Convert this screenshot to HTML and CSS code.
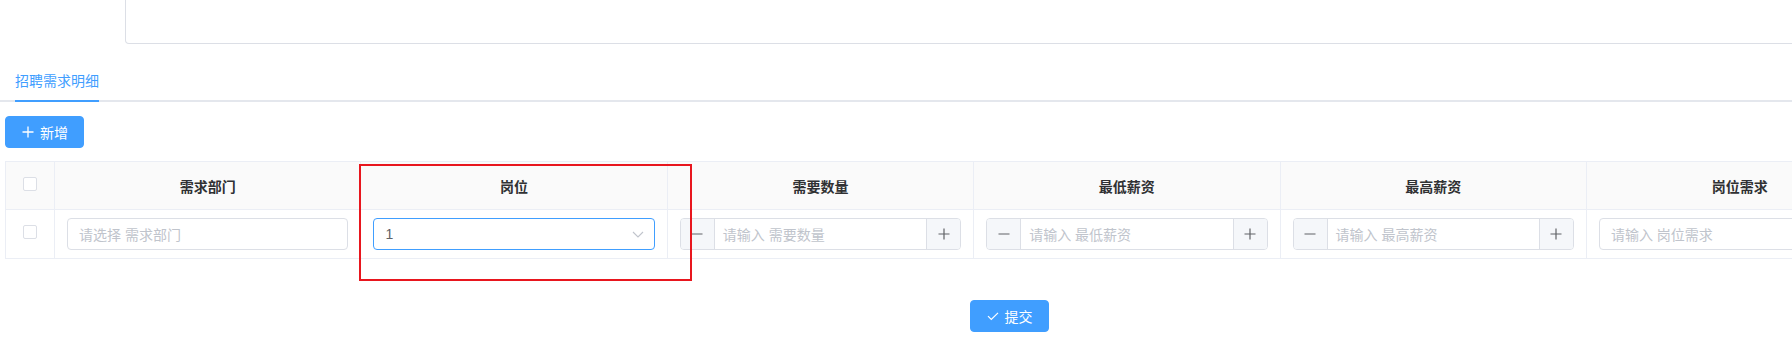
FILE: index.html
```html
<!DOCTYPE html>
<html lang="zh-CN">
<head>
  <meta charset="UTF-8">
  <title>招聘需求</title>
  <link rel="stylesheet" href="styles.css">
</head>
<body>
  <div class="page">
    <!-- 上方备注输入框 (只露出底部) -->
    <div class="remark-row">
      <div class="remark"></div>
    </div>

    <!-- 标签页 -->
    <div class="tabs">
      <div class="tab active">招聘需求明细</div>
    </div>

    <div class="toolbar">
      <button class="btn btn-primary">
        <svg width="14" height="14" viewBox="0 0 14 14"><path d="M7 1.5v11M1.5 7h11" stroke="#fff" stroke-width="1.3" fill="none"/></svg>
        <span>新增</span>
      </button>
    </div>

    <!-- 明细表格 -->
    <div class="table-wrap">
      <div class="grid">
        <div class="th"><span class="checkbox"></span></div>
        <div class="th">需求部门</div>
        <div class="th">岗位</div>
        <div class="th">需要数量</div>
        <div class="th">最低薪资</div>
        <div class="th">最高薪资</div>
        <div class="th">岗位需求</div>

        <div class="td center"><span class="checkbox"></span></div>
        <div class="td"><div class="input placeholder">请选择 需求部门</div></div>
        <div class="td">
          <div class="input select">
            <span>1</span>
            <svg width="14" height="14" viewBox="0 0 14 14"><path d="M2 5l5 5 5-5" stroke="#c0c4cc" stroke-width="1.1" fill="none"/></svg>
          </div>
        </div>
        <div class="td">
          <div class="number">
            <span class="num-btn minus"><svg width="14" height="14" viewBox="0 0 14 14"><path d="M1.5 7h11" stroke="#606266" stroke-width="1.2"/></svg></span>
            <span class="num-text">请输入 需要数量</span>
            <span class="num-btn plus"><svg width="14" height="14" viewBox="0 0 14 14"><path d="M7 1.5v11M1.5 7h11" stroke="#606266" stroke-width="1.2"/></svg></span>
          </div>
        </div>
        <div class="td">
          <div class="number">
            <span class="num-btn minus"><svg width="14" height="14" viewBox="0 0 14 14"><path d="M1.5 7h11" stroke="#606266" stroke-width="1.2"/></svg></span>
            <span class="num-text">请输入 最低薪资</span>
            <span class="num-btn plus"><svg width="14" height="14" viewBox="0 0 14 14"><path d="M7 1.5v11M1.5 7h11" stroke="#606266" stroke-width="1.2"/></svg></span>
          </div>
        </div>
        <div class="td">
          <div class="number">
            <span class="num-btn minus"><svg width="14" height="14" viewBox="0 0 14 14"><path d="M1.5 7h11" stroke="#606266" stroke-width="1.2"/></svg></span>
            <span class="num-text">请输入 最高薪资</span>
            <span class="num-btn plus"><svg width="14" height="14" viewBox="0 0 14 14"><path d="M7 1.5v11M1.5 7h11" stroke="#606266" stroke-width="1.2"/></svg></span>
          </div>
        </div>
        <div class="td"><div class="input placeholder">请输入 岗位需求</div></div>
      </div>
      <!-- 标注框 -->
      <div class="highlight"></div>
    </div>

    <div class="footer">
      <button class="btn btn-primary">
        <svg width="14" height="14" viewBox="0 0 14 14"><path d="M2 7.2l3.3 3.3L12 3.8" stroke="#fff" stroke-width="1.2" fill="none"/></svg>
        <span>提交</span>
      </button>
    </div>
  </div>
</body>
</html>
```

FILE: styles.css
```css
* { box-sizing: border-box; margin: 0; padding: 0; }

body {
  font-family: "Liberation Sans", "Noto Sans CJK SC", sans-serif;
  font-size: 14px;
  color: #606266;
  background: #fff;
  overflow: hidden;
}

.page {
  width: 2018px;
}

/* 备注框 */
.remark-row {
  padding-left: 125px;
}

.remark {
  height: 44px;
  border: 1px solid #dcdfe6;
  border-top: none;
  border-radius: 0 0 4px 4px;
}

/* 标签页 */
.tabs {
  margin-top: 16px;
  border-bottom: 2px solid #e4e7ed;
  padding-left: 15px;
  display: flex;
}

.tab {
  height: 40px;
  line-height: 43px;
  font-size: 14px;
  color: #303133;
  margin-bottom: -2px;
}

.tab.active {
  color: #409eff;
  border-bottom: 2px solid #409eff;
  height: 42px;
}

/* 按钮 */
.toolbar {
  padding: 14px 0 0 5px;
}

.btn {
  display: inline-flex;
  align-items: center;
  gap: 5px;
  height: 32px;
  padding: 0 15px;
  font-family: inherit;
  font-size: 14px;
  border-radius: 4px;
  border: 1px solid transparent;
  cursor: pointer;
}

.btn-primary {
  background: #409eff;
  border-color: #409eff;
  color: #fff;
}

/* 表格 */
.table-wrap {
  position: relative;
  margin: 13px 0 0 5px;
}

.grid {
  display: grid;
  grid-template-columns: 49px repeat(6, 306.4px);
  border-top: 1px solid #ebeef5;
  border-left: 1px solid #ebeef5;
}

.th, .td {
  border-right: 1px solid #ebeef5;
  border-bottom: 1px solid #ebeef5;
  display: flex;
  align-items: center;
}

.th {
  height: 48px;
  background: #fafafa;
  justify-content: center;
  color: #303133;
  font-weight: 600;
}

.td {
  height: 49px;
  padding: 0 12px;
}

.td.center {
  justify-content: center;
  padding: 0;
}

.checkbox {
  display: block;
  width: 14px;
  height: 14px;
  border: 1px solid #dcdfe6;
  border-radius: 2px;
  background: #fff;
  margin-bottom: 4px;
}

.input {
  width: 100%;
  height: 32px;
  border: 1px solid #dcdfe6;
  border-radius: 4px;
  padding: 0 11px;
  display: flex;
  align-items: center;
  color: #606266;
}

.placeholder {
  color: #c0c4cc;
}

.select {
  border-color: #409eff;
  justify-content: space-between;
}

.select svg {
  margin-right: -2px;
}

.number {
  width: 100%;
  height: 32px;
  border: 1px solid #dcdfe6;
  border-radius: 4px;
  display: flex;
  align-items: stretch;
  overflow: hidden;
}

.num-btn {
  width: 34px;
  flex: none;
  background: #f5f7fa;
  display: flex;
  align-items: center;
  justify-content: center;
}

.num-btn.minus { border-right: 1px solid #dcdfe6; }
.num-btn.plus { border-left: 1px solid #dcdfe6; }

.num-text {
  flex: 1;
  display: flex;
  align-items: center;
  padding-left: 8px;
  color: #c0c4cc;
}

.highlight {
  position: absolute;
  left: 354px;
  top: 3px;
  width: 333px;
  height: 117px;
  border: 2px solid #e8161e;
}

/* 提交 */
.footer {
  display: flex;
  justify-content: center;
  margin-top: 41px;
}
```
